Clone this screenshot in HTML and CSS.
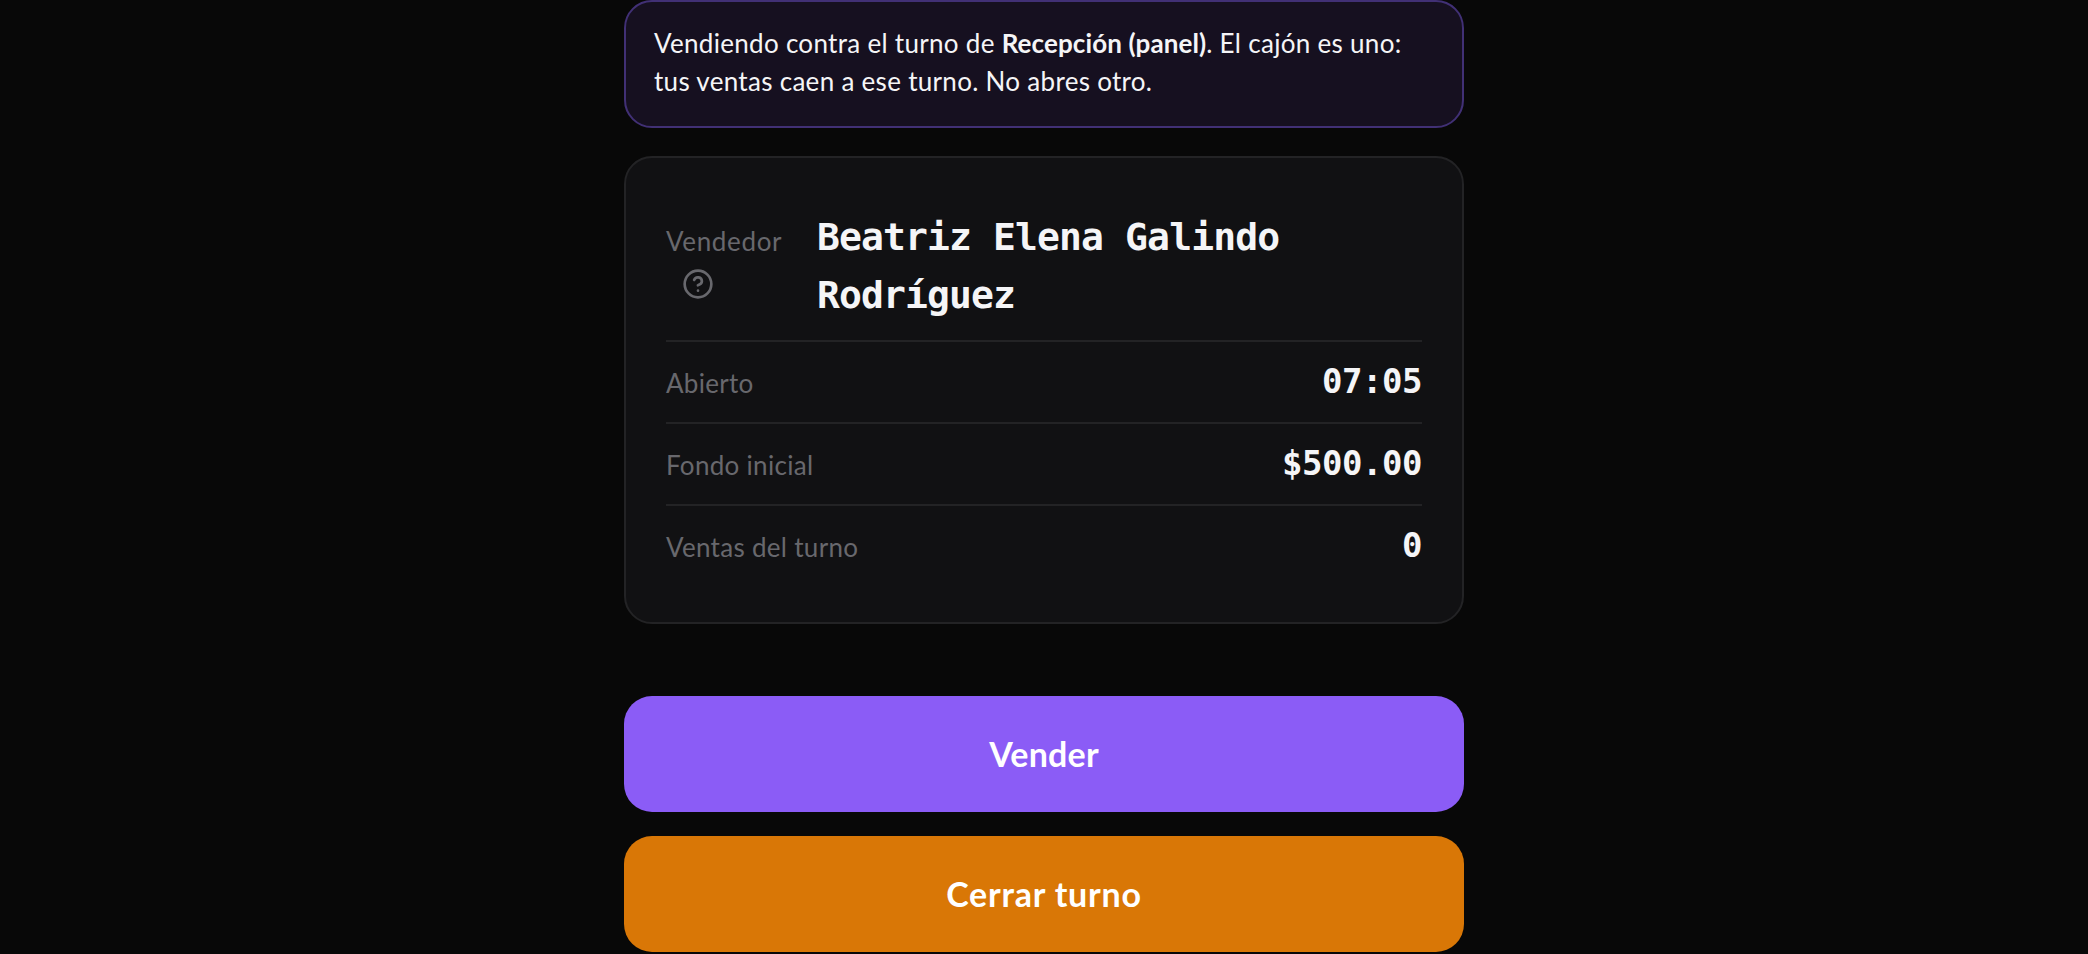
FILE: index.html
```html
<!DOCTYPE html>
<html lang="es">
<head>
<meta charset="utf-8">
<title>Turno</title>
<link rel="stylesheet" href="styles.css">
</head>
<body>
<main class="panel">
  <p class="notice">Vendiendo contra el turno de <strong>Recepción (panel)</strong>. El cajón es uno:<br>tus ventas caen a ese turno. No abres otro.</p>

  <dl class="card">
    <div class="row row-seller">
      <dt class="label">
        Vendedor
        <svg class="help" viewBox="0 0 24 24" fill="none" stroke="currentColor" stroke-width="2" stroke-linecap="round" stroke-linejoin="round" aria-hidden="true">
          <circle cx="12" cy="12" r="10"/>
          <path d="M9.09 9a3 3 0 0 1 5.83 1c0 2-3 3-3 3"/>
          <path d="M12 17h.01"/>
        </svg>
      </dt>
      <dd class="value seller">Beatriz Elena Galindo Rodríguez</dd>
    </div>
    <div class="row">
      <dt class="label">Abierto</dt>
      <dd class="value">07:05</dd>
    </div>
    <div class="row">
      <dt class="label">Fondo inicial</dt>
      <dd class="value">$500.00</dd>
    </div>
    <div class="row">
      <dt class="label">Ventas del turno</dt>
      <dd class="value">0</dd>
    </div>
  </dl>

  <div class="actions">
    <button class="btn btn-sell" type="button">Vender</button>
    <button class="btn btn-close" type="button">Cerrar turno</button>
  </div>
</main>
</body>
</html>
```

FILE: styles.css
```css
* {
  box-sizing: border-box;
}

body {
  margin: 0;
  background: #080808;
  color: #f5f5f7;
  font-family: Lato, "Open Sans", sans-serif;
  font-size: 26px;
  line-height: 38px;
  letter-spacing: 0.3px;
}

.panel {
  width: 840px;
  margin: 0 auto;
}

.notice {
  margin: 0;
  padding: 22px 28px 26px;
  border: 2px solid #413075;
  border-radius: 28px;
  background: #161020;
}

.notice strong {
  font-weight: 700;
  letter-spacing: 0.1px;
}

.card {
  margin: 28px 0 0;
  padding: 34px 40px 36px;
  border: 2px solid #232325;
  border-radius: 28px;
  background: #111113;
}

.row {
  display: flex;
  align-items: baseline;
  justify-content: space-between;
  padding: 17px 0 19px;
  border-bottom: 2px solid #232325;
}

.row:last-child {
  border-bottom: 0;
}

.row-seller {
  align-items: flex-start;
  gap: 31px;
  padding: 16px 0;
}

.label {
  color: #68686d;
}

.row-seller .label {
  flex: 0 0 120px;
  margin-top: 14px;
  letter-spacing: 0.65px;
}

.help {
  display: block;
  width: 32px;
  height: 32px;
  margin: 8px 0 0 16px;
}

.value {
  margin: 0;
  font-family: "DejaVu Sans Mono", "Liberation Mono", monospace;
  font-size: 34px;
  font-weight: 700;
  line-height: 44px;
  letter-spacing: -0.47px;
}

.seller {
  flex: 1;
  font-size: 38px;
  line-height: 58px;
  letter-spacing: -0.87px;
}

.actions {
  display: flex;
  flex-direction: column;
  gap: 24px;
  margin-top: 72px;
}

.btn {
  height: 116px;
  padding: 0;
  border: 0;
  border-radius: 28px;
  color: #fff;
  font: 700 34px/40px Lato, "Open Sans", sans-serif;
}

.btn-sell {
  background: #8b5cf6;
  letter-spacing: 0.2px;
}

.btn-close {
  background: #d97706;
  letter-spacing: 0.8px;
}
```
